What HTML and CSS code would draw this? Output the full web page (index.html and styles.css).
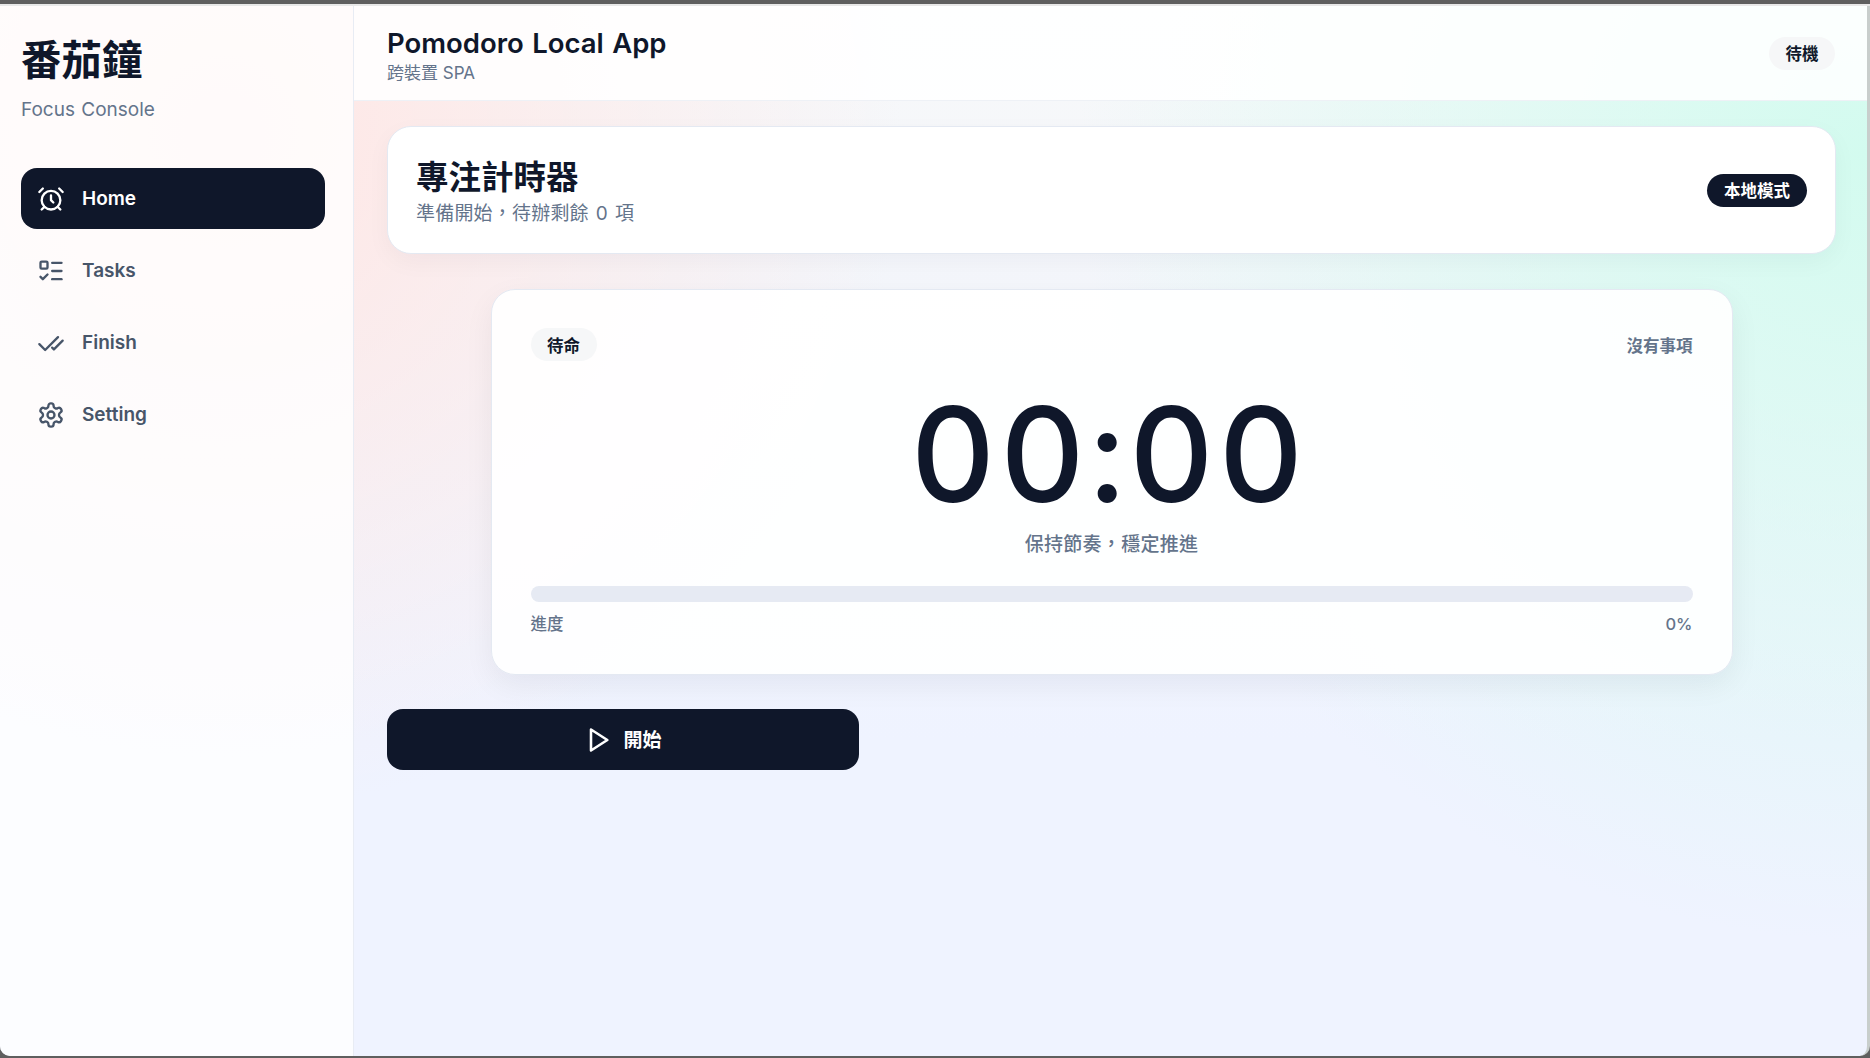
FILE: index.html
```html
<!DOCTYPE html>
<html lang="zh-Hant">
<head>
  <meta charset="UTF-8">
  <title>番茄鐘</title>
  <link rel="stylesheet" href="styles.css">
</head>
<body>

<div class="window-bar"></div>

<div class="app">
  <aside class="sidebar">
    <div class="brand">番茄鐘</div>
    <div class="brand-sub">Focus Console</div>

    <nav class="nav">
      <a class="nav-item active">
        <svg class="nav-icon" viewBox="0 0 24 24"><circle cx="12" cy="13" r="8"/><path d="M12 9v4l2 2"/><path d="M5 3 2 6"/><path d="m22 6-3-3"/><path d="M6.38 18.7 4 21"/><path d="M17.64 18.67 20 21"/></svg>
        Home
      </a>
      <a class="nav-item">
        <svg class="nav-icon" viewBox="0 0 24 24"><rect x="3" y="4" width="6" height="6" rx="1"/><path d="m3 17 2 2 4-4"/><path d="M13 5h8"/><path d="M13 12h8"/><path d="M13 19h8"/></svg>
        Tasks
      </a>
      <a class="nav-item">
        <svg class="nav-icon" viewBox="0 0 24 24"><path d="M18 7 7 18l-5-5"/><path d="m22 10-7.5 7.5L13 16"/></svg>
        Finish
      </a>
      <a class="nav-item">
        <svg class="nav-icon" viewBox="0 0 24 24"><path d="M12.22 2h-.44a2 2 0 0 0-2 2v.18a2 2 0 0 1-1 1.73l-.43.25a2 2 0 0 1-2 0l-.15-.08a2 2 0 0 0-2.73.73l-.22.38a2 2 0 0 0 .73 2.73l.15.1a2 2 0 0 1 1 1.72v.51a2 2 0 0 1-1 1.74l-.15.09a2 2 0 0 0-.73 2.73l.22.38a2 2 0 0 0 2.73.73l.15-.08a2 2 0 0 1 2 0l.43.25a2 2 0 0 1 1 1.73V20a2 2 0 0 0 2 2h.44a2 2 0 0 0 2-2v-.18a2 2 0 0 1 1-1.73l.43-.25a2 2 0 0 1 2 0l.15.08a2 2 0 0 0 2.73-.73l.22-.39a2 2 0 0 0-.73-2.73l-.15-.08a2 2 0 0 1-1-1.74v-.5a2 2 0 0 1 1-1.74l.15-.09a2 2 0 0 0 .73-2.73l-.22-.38a2 2 0 0 0-2.73-.73l-.15.08a2 2 0 0 1-2 0l-.43-.25a2 2 0 0 1-1-1.73V4a2 2 0 0 0-2-2z"/><circle cx="12" cy="12" r="3"/></svg>
        Setting
      </a>
    </nav>
  </aside>

  <div class="main">
    <header class="topbar">
      <div class="topbar-text">
        <div class="topbar-title">Pomodoro Local App</div>
        <div class="topbar-sub">跨裝置 SPA</div>
      </div>
      <span class="pill">待機</span>
    </header>

    <main class="content">
      <section class="hero-card">
        <div class="hero-text">
          <h1 class="hero-title">專注計時器</h1>
          <div class="hero-sub">準備開始，待辦剩餘 0 項</div>
        </div>
        <span class="mode-badge">本地模式</span>
      </section>

      <section class="timer-card">
        <div class="timer-head">
          <span class="pill">待命</span>
          <span class="timer-task">沒有事項</span>
        </div>
        <div class="timer-time">00:00</div>
        <div class="timer-note">保持節奏，穩定推進</div>
        <div class="progress"></div>
        <div class="progress-row">
          <span>進度</span>
          <span>0%</span>
        </div>
      </section>

      <button class="start-btn">
        <svg class="btn-icon" viewBox="0 0 24 24"><polygon points="6 3 20 12 6 21"/></svg>
        開始
      </button>
    </main>
  </div>
</div>

</body>
</html>
```

FILE: styles.css
```css
* {
  box-sizing: border-box;
}

html, body {
  height: 100%;
}

body {
  margin: 0;
  background: #5f5f5f;
  color: #0f172a;
  font-family: Inter, "Noto Sans CJK TC", sans-serif;
  overflow: hidden;
}

.window-bar {
  height: 6px;
  background: #5f5f5f;
  border-bottom: 2px solid #e8e8e8;
}

.app {
  display: flex;
  height: 1050px;
  border-right: 3px solid #c8cecc;
  border-radius: 0 0 10px 10px;
  overflow: hidden;
  background:
    radial-gradient(circle at 12% 12%, #ffe6e4 0, rgba(255,230,228,0) 36%),
    radial-gradient(circle at 100% 14%, #d3fbef 0, rgba(211,251,239,0) 38%),
    linear-gradient(180deg, #f7f8f9 0, #eff3ff 70%);
}

.sidebar {
  width: 354px;
  flex-shrink: 0;
  padding: 26px 28px 0 21px;
  background: rgba(255,255,255,0.8);
  border-right: 1px solid #e8ecf4;
}

.brand {
  font-size: 40.5px;
  line-height: 58px;
  font-weight: 700;
}

.brand-sub {
  margin-top: 6px;
  font-size: 19px;
  line-height: 28px;
  word-spacing: 1px;
  color: #64748b;
}

.nav {
  display: flex;
  flex-direction: column;
  gap: 11px;
  margin-top: 44px;
}

.nav-item {
  display: flex;
  align-items: center;
  gap: 17px;
  height: 61px;
  padding: 0 16px;
  border-radius: 16px;
  font-size: 19px;
  font-weight: 600;
  color: #475569;
}

.nav-item.active {
  background: #0f172a;
  color: white;
}

.nav-icon {
  width: 28px;
  height: 28px;
  flex-shrink: 0;
  fill: none;
  stroke: currentColor;
  stroke-width: 2;
  stroke-linecap: round;
  stroke-linejoin: round;
}

.main {
  flex: 1;
  display: flex;
  flex-direction: column;
}

.topbar {
  display: flex;
  align-items: center;
  justify-content: space-between;
  height: 95px;
  padding: 0 32px 0 33px;
  background: rgba(255,255,255,0.88);
  border-bottom: 1px solid #eef1f6;
}

.topbar-text {
  padding-top: 2px;
}

.topbar-title {
  font-size: 27.5px;
  line-height: 36px;
  font-weight: 600;
  word-spacing: 1.5px;
}

.topbar-sub {
  margin-top: 1px;
  font-size: 17px;
  line-height: 22px;
  color: #64748b;
}

.pill {
  display: inline-flex;
  align-items: center;
  height: 33px;
  padding: 0 16.5px;
  border-radius: 999px;
  background: #f6f7f8;
  font-size: 16.5px;
  font-weight: 700;
}

.content {
  flex: 1;
  display: flex;
  flex-direction: column;
  align-items: flex-start;
  padding: 25px 31px 0 33px;
}

.hero-card {
  display: flex;
  align-items: center;
  justify-content: space-between;
  width: 100%;
  height: 128px;
  padding: 0 28px;
  background: white;
  border: 1px solid #e4e9f2;
  border-radius: 24px;
  box-shadow: 0 8px 24px rgba(15,23,42,0.04);
}

.hero-text {
  padding-top: 5px;
}

.hero-title {
  margin: 0;
  font-size: 32.5px;
  line-height: 40px;
  font-weight: 700;
}

.hero-sub {
  margin-top: 2px;
  font-size: 19px;
  line-height: 28px;
  letter-spacing: 0.2px;
  word-spacing: 1.5px;
  color: #64748b;
}

.mode-badge {
  display: inline-flex;
  align-items: center;
  height: 33px;
  padding: 0 17px;
  border-radius: 999px;
  background: #0f172a;
  color: white;
  font-size: 16.5px;
  font-weight: 700;
}

.timer-card {
  align-self: center;
  width: 1242px;
  height: 386px;
  margin-top: 35px;
  padding: 38px 39px 0;
  background: rgba(255,255,255,0.92);
  border: 1px solid #e4e9f2;
  border-radius: 24px;
  box-shadow: 0 10px 30px rgba(15,23,42,0.06);
}

.timer-head {
  display: flex;
  align-items: center;
  justify-content: space-between;
}

.timer-task {
  font-size: 16.5px;
  font-weight: 600;
  color: #64748b;
}

.timer-time {
  margin: 27px 5px 0 0;
  text-align: center;
  font-size: 132px;
  line-height: 132px;
  font-weight: 500;
  font-variant-numeric: tabular-nums;
  letter-spacing: 4px;
}

.timer-note {
  margin-top: 11px;
  text-align: center;
  font-size: 19px;
  line-height: 28px;
  font-weight: 500;
  letter-spacing: 0.3px;
  color: #64748b;
}

.progress {
  height: 16px;
  margin-top: 27px;
  border-radius: 999px;
  background: #e6eaf3;
}

.progress-row {
  display: flex;
  justify-content: space-between;
  margin-top: 11px;
  font-size: 16.5px;
  line-height: 22px;
  font-weight: 500;
  color: #64748b;
}

.start-btn {
  display: flex;
  align-items: center;
  justify-content: center;
  gap: 11px;
  width: 472px;
  height: 61px;
  margin-top: 34px;
  padding: 0 0 2px;
  background: #0f172a;
  color: white;
  border: none;
  border-radius: 16px;
  font-family: inherit;
  font-size: 19px;
  font-weight: 700;
  cursor: pointer;
}

.btn-icon {
  width: 28px;
  height: 28px;
  margin-top: 2px;
  fill: none;
  stroke: currentColor;
  stroke-width: 2.2;
  stroke-linejoin: round;
}
```
